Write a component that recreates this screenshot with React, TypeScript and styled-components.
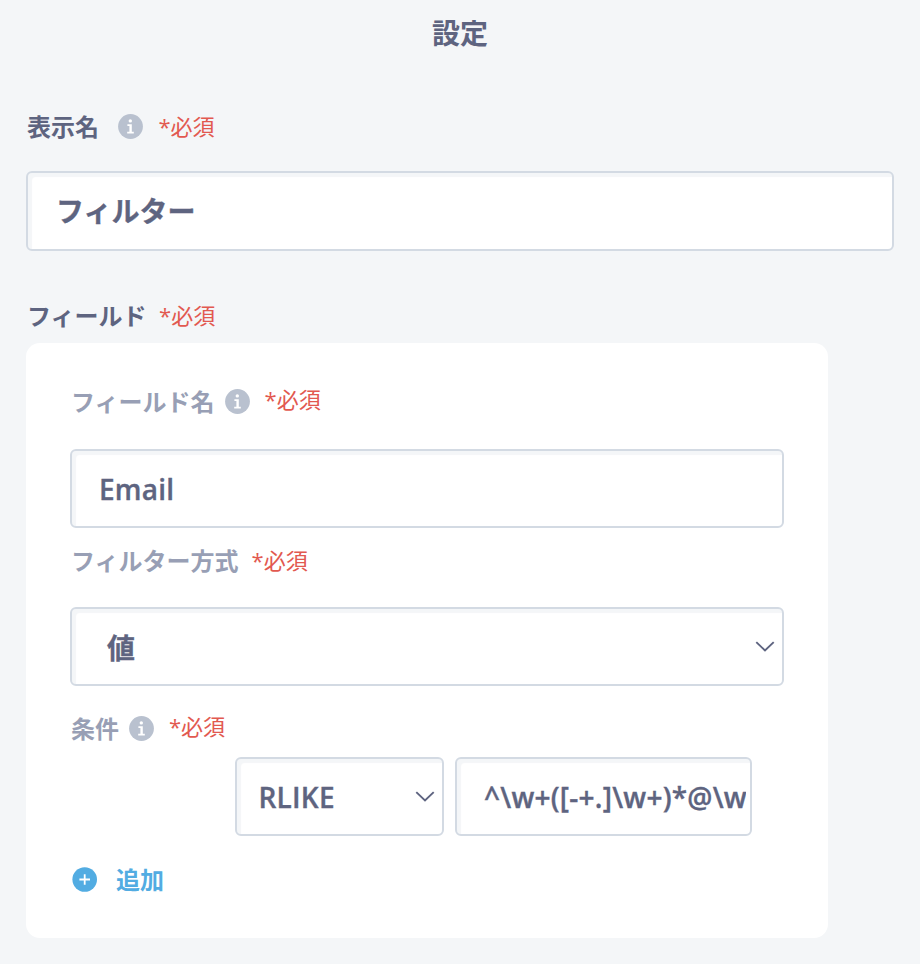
import React from "react";
import styled, { createGlobalStyle } from "styled-components";

const GlobalStyle = createGlobalStyle`
  *, *::before, *::after { box-sizing: border-box; }
  body {
    margin: 0;
    background: #f4f6f8;
    color: #5e6480;
    font-family: "Open Sans", "Noto Sans CJK JP", sans-serif;
    -webkit-font-smoothing: antialiased;
  }
`;

const Page = styled.main`
  height: 964px;
  padding: 0 26px;
  overflow: hidden;
`;

const Title = styled.h1`
  margin: 0;
  height: 68px;
  line-height: 66px;
  font-size: 28px;
  font-weight: 700;
  text-align: center;
`;

const LabelRow = styled.div<{ $top: number; $bottom: number }>`
  display: flex;
  align-items: center;
  height: 36px;
  margin-top: ${(p) => p.$top}px;
  margin-bottom: ${(p) => p.$bottom}px;
`;

const Label = styled.label<{ $muted?: boolean }>`
  padding-left: 1px;
  font-size: 24px;
  line-height: 36px;
  font-weight: 700;
  white-space: nowrap;
  color: ${(p) => (p.$muted ? "#989fb5" : "#5e6480")};
`;

const Required = styled.span<{ $gap: number; $lift?: number }>`
  margin-left: ${(p) => p.$gap}px;
  padding-bottom: ${(p) => p.$lift ?? 2}px;
  font-size: 22px;
  line-height: 32px;
  color: #e25950;
  white-space: nowrap;
`;

const InfoSvg = styled.svg<{ $gap: number; $lift: number }>`
  flex: none;
  width: 25px;
  height: 25px;
  margin-left: ${(p) => p.$gap}px;
  margin-bottom: ${(p) => p.$lift}px;
`;

const fieldBox = `
  display: block;
  min-width: 0;
  border: 2px solid #d3dae3;
  border-radius: 6px;
  background: #fff;
  box-shadow: inset 4px 4px 1px #f4f6f8;
  color: #5e6480;
  font: 600 28px "Open Sans", "Noto Sans CJK JP", sans-serif;
  letter-spacing: 0.24px;
  -webkit-text-stroke: 0.35px #5e6480;
  outline: none;
`;

const Input = styled.input<{ $height?: number; $bold?: boolean }>`
  ${fieldBox}
  width: 100%;
  height: ${(p) => p.$height ?? 79}px;
  padding: ${(p) => (p.$bold ? "0 4px 2px 28px" : "0 4px 0 27px")};
  font-weight: ${(p) => (p.$bold ? 700 : 600)};
  letter-spacing: ${(p) => (p.$bold ? "0" : "0.24px")};
`;

const SelectBox = styled.button<{ $indent: number }>`
  ${fieldBox}
  display: flex;
  align-items: center;
  justify-content: space-between;
  width: 100%;
  height: 79px;
  padding: 0 7.5px 0 ${(p) => p.$indent}px;
`;

const Chevron = styled.svg`
  flex: none;
  width: 20px;
  height: 12px;
`;

const Panel = styled.section`
  width: 802px;
  height: 595px;
  padding: 0 44px;
  border-radius: 14px;
  background: #fff;
  display: flow-root;
`;

const ConditionRow = styled.div`
  display: grid;
  grid-template-columns: 209px 297px;
  column-gap: 11px;
  margin-left: 165px;
`;

const AddButton = styled.button`
  display: flex;
  align-items: center;
  gap: 19px;
  height: 36px;
  margin: 25px 0 0 2px;
  padding: 0;
  border: 0;
  background: none;
  color: #52ace2;
  font: 700 24px/36px "Open Sans", "Noto Sans CJK JP", sans-serif;
`;

const AddSvg = styled.svg`
  width: 25px;
  height: 25px;
`;

const AddText = styled.span`
  padding-top: 1px;
`;

function InfoIcon({ gap, lift = 0 }: { gap: number; lift?: number }) {
  return (
    <InfoSvg $gap={gap} $lift={lift} viewBox="0 0 25 25" aria-hidden="true">
      <circle cx="12.5" cy="12.5" r="12.4" fill="#b9c1cf" />
      <circle cx="12.3" cy="6.9" r="1.7" fill="#fff" />
      <path d="M9.4 10.2h4.4v7.6h2v1.8H9.2v-1.8h2.2V12h-2z" fill="#fff" />
    </InfoSvg>
  );
}

function Select({ value, indent }: { value: string; indent: number }) {
  return (
    <SelectBox type="button" $indent={indent}>
      <span>{value}</span>
      <Chevron viewBox="0 0 20 12" aria-hidden="true">
        <path d="M1.3 1.1 10 9.5l8.7-8.4" fill="none" stroke="#5e6480" strokeWidth="1.9" />
      </Chevron>
    </SelectBox>
  );
}

export default function App() {
  return (
    <>
      <GlobalStyle />
      <Page>
        <Title>設定</Title>
        <LabelRow $top={41} $bottom={26}>
          <Label>表示名</Label>
          <InfoIcon gap={19} lift={2} />
          <Required $gap={15.5}>*必須</Required>
        </LabelRow>
        <Input $height={80} $bold defaultValue="フィルター" />
        <LabelRow $top={47} $bottom={9}>
          <Label>フィールド</Label>
          <Required $gap={12.5}>*必須</Required>
        </LabelRow>
        <Panel>
          <LabelRow $top={41} $bottom={29}>
            <Label $muted>フィールド名</Label>
            <InfoIcon gap={10} lift={1} />
            <Required $gap={15} $lift={6}>*必須</Required>
          </LabelRow>
          <Input defaultValue="Email" />
          <LabelRow $top={15} $bottom={28}>
            <Label $muted>フィルター方式</Label>
            <Required $gap={13} $lift={3}>*必須</Required>
          </LabelRow>
          <Select value="値" indent={35} />
          <LabelRow $top={25} $bottom={10}>
            <Label $muted>条件</Label>
            <InfoIcon gap={10} lift={1} />
            <Required $gap={15} $lift={6}>*必須</Required>
          </LabelRow>
          <ConditionRow>
            <Select value="RLIKE" indent={21.5} />
            <Input defaultValue="^\w+([-+.]\w+)*@\w+([-.]\w+)*" />
          </ConditionRow>
          <AddButton type="button">
            <AddSvg viewBox="0 0 25 25" aria-hidden="true">
              <circle cx="12.7" cy="12.5" r="12.3" fill="#52ace2" />
              <path d="M12.7 7.2v10.6M7.4 12.5H18" stroke="#fff" strokeWidth="1.8" />
            </AddSvg>
            <AddText>追加</AddText>
          </AddButton>
        </Panel>
      </Page>
    </>
  );
}
